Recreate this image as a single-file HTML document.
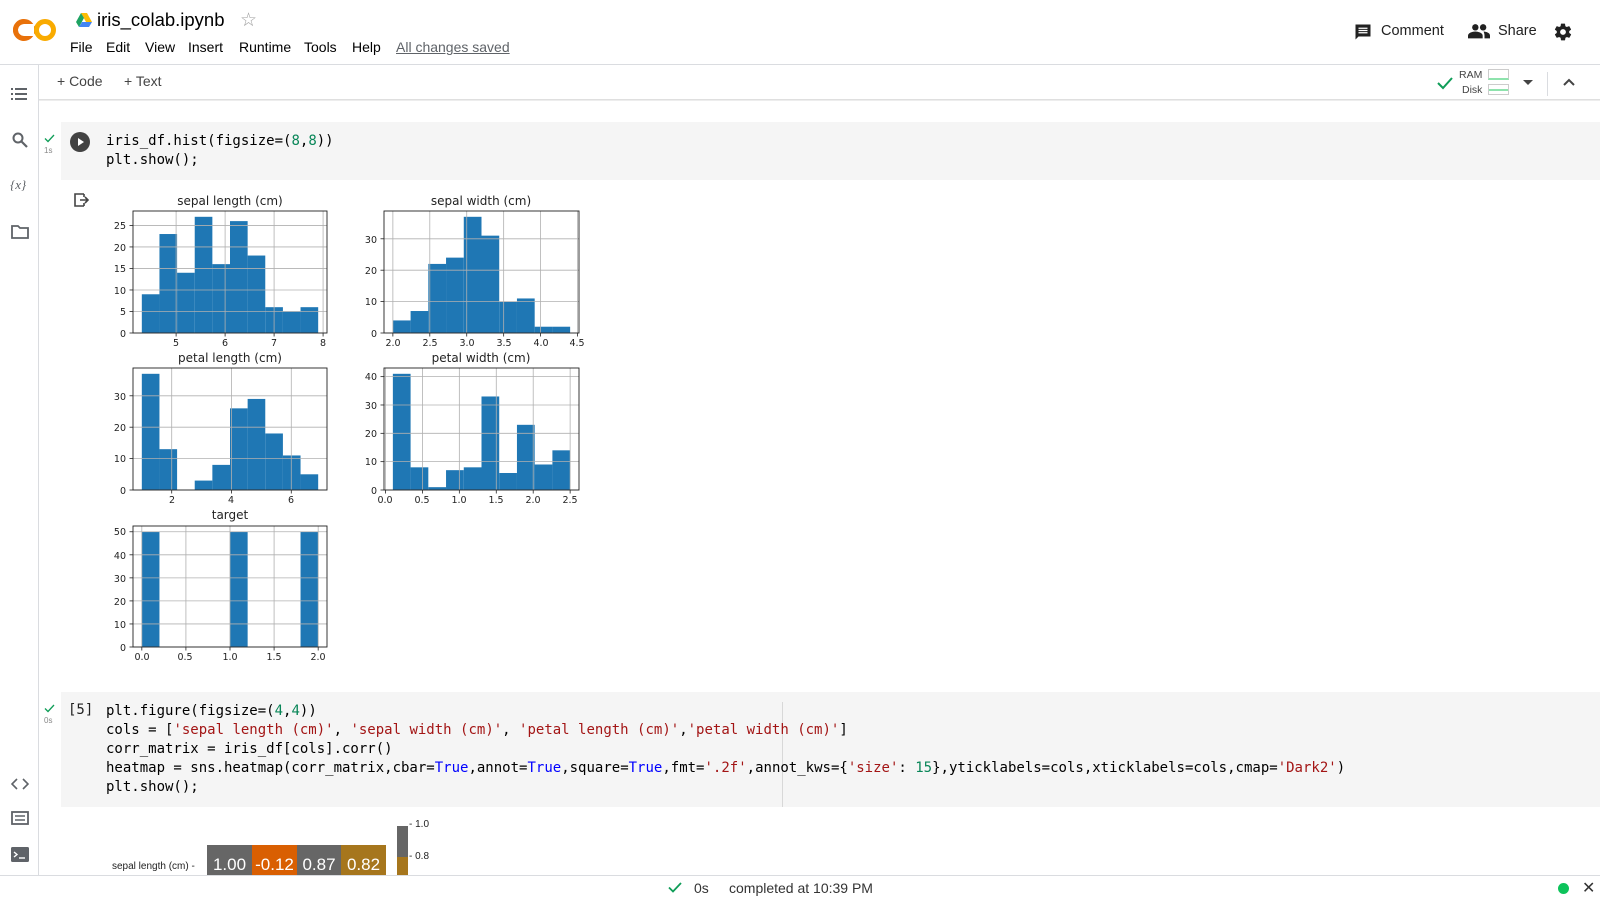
<!DOCTYPE html>
<html><head><meta charset="utf-8"><style>
*{box-sizing:border-box;margin:0;padding:0}
body{width:1600px;height:900px;overflow:hidden;background:#fff;font-family:"Liberation Sans",Arial,sans-serif;color:#212121;position:relative}
.a{position:absolute;white-space:pre}
.mono{font-family:"DejaVu Sans Mono","Liberation Mono",monospace;font-size:14px;color:#000}
.s{color:#a31515}.n{color:#098658}.k{color:#0000ff}
.menu{font-size:14px;top:39px;color:#000}
.hc{position:absolute;top:845px;height:31px;color:#fff;font-size:17px;text-align:center;line-height:40px;overflow:hidden}
</style></head><body>
<!-- logo -->
<svg class="a" style="left:12px;top:16px" width="46" height="28" viewBox="0 0 46 28">
<circle cx="12" cy="14" r="8.5" fill="none" stroke="#e8710a" stroke-width="5"/>
<rect x="12" y="8" width="10" height="12" fill="#fff"/>
<circle cx="33" cy="14" r="8.5" fill="none" stroke="#f9ab00" stroke-width="5"/>
<path d="M12 5.5 A8.5 8.5 0 0 0 12 22.5" fill="none" stroke="#e8710a" stroke-width="5"/>
</svg>
<svg class="a" style="left:76px;top:13px" width="16" height="14" viewBox="0 0 16 14"><path d="M5 0h6l5 9h-6z" fill="#fbbc04"/><path d="M5 0L0 9l3 5 5-9z" fill="#1ea362"/><path d="M3 14h10l3-5H6z" fill="#4285f4"/></svg>
<div class="a" style="left:97px;top:9px;font-size:18.5px;color:#000">iris_colab.ipynb</div>
<div class="a" style="left:240px;top:9px;font-size:19px;color:#9e9e9e">☆</div>
<div class="a menu" style="left:70px">File</div>
<div class="a menu" style="left:106px">Edit</div>
<div class="a menu" style="left:145px">View</div>
<div class="a menu" style="left:188px">Insert</div>
<div class="a menu" style="left:239px">Runtime</div>
<div class="a menu" style="left:304px">Tools</div>
<div class="a menu" style="left:352px">Help</div>
<div class="a menu" style="left:396px;color:#5f6368;text-decoration:underline">All changes saved</div>
<svg class="a" style="left:1354px;top:23px" width="18" height="18" viewBox="0 0 24 24"><path d="M2 2h20v16H6l-4 4z" fill="#212121"/><path d="M6 7h12M6 10h12M6 13h12" stroke="#fff" stroke-width="1.6"/></svg>
<div class="a" style="left:1381px;top:23px;font-size:14.5px">Comment</div>
<svg class="a" style="left:1468px;top:23px" width="22" height="16" viewBox="0 0 24 16"><circle cx="8" cy="4" r="3.5" fill="#212121"/><circle cx="16.5" cy="4" r="3.5" fill="#212121"/><path d="M0 16v-3c0-3 5-4.5 8-4.5s8 1.5 8 4.5v3z" fill="#212121"/><path d="M17 8.6c3 .2 7 1.5 7 4.4v3h-6v-3c0-1.7-.5-3-1-4.4z" fill="#212121"/></svg>
<div class="a" style="left:1498px;top:23px;font-size:14.5px">Share</div>
<svg class="a" style="left:1553px;top:22px" width="20" height="20" viewBox="0 0 24 24"><path fill="#212121" d="M19.4 13c.04-.3.06-.65.06-1s-.02-.7-.06-1l2.1-1.650c.2-.15.25-.42.12-.64l-2-3.46c-.12-.22-.4-.3-.6-.22l-2.5 1c-.52-.4-1.080-.73-1.7-.98l-.37-2.65A.5.5 0 0 0 14 2h-4a.5.5 0 0 0-.5.42l-.37 2.65c-.62.25-1.180.59-1.7.98l-2.5-1c-.23-.08-.48 0-.6.22l-2 3.46c-.13.22-.07.49.12.64L4.57 11c-.04.32-.07.66-.07 1s.03.68.07 1l-2.1 1.65c-.2.15-.25.42-.12.64l2 3.46c.12.22.4.3.6.22l2.5-1c.52.4 1.08.73 1.7.98l.37 2.65c.04.24.25.42.5.42h4c.25 0 .46-.18.5-.42l.37-2.65c.62-.25 1.18-.58 1.7-.98l2.5 1c.23.08.48 0 .6-.22l2-3.46c.12-.22.07-.49-.12-.64zM12 15.5A3.5 3.5 0 1 1 12 8.5a3.5 3.5 0 0 1 0 7z"/></svg>
<div class="a" style="left:0;top:64px;width:1600px;height:1px;background:#dadce0"></div>
<!-- sidebar -->
<div class="a" style="left:38px;top:65px;width:1px;height:810px;background:#dadce0"></div>
<svg class="a" style="left:11px;top:87px" width="16" height="14" viewBox="0 0 16 14"><g fill="#5f6368"><rect x="0" y="1" width="2" height="2"/><rect x="0" y="6" width="2" height="2"/><rect x="0" y="11" width="2" height="2"/><rect x="4" y="1" width="12" height="2"/><rect x="4" y="6" width="12" height="2"/><rect x="4" y="11" width="12" height="2"/></g></svg>
<svg class="a" style="left:12px;top:132px" width="16" height="16" viewBox="0 0 16 16"><circle cx="6" cy="6" r="4.5" fill="none" stroke="#5f6368" stroke-width="2"/><path d="M9.5 9.5L15 15" stroke="#5f6368" stroke-width="2.2"/></svg>
<div class="a" style="left:10px;top:177px;font-size:13px;font-style:italic;color:#5f6368;font-family:'Liberation Serif',serif">{<i>x</i>}</div>
<svg class="a" style="left:11px;top:225px" width="18" height="14" viewBox="0 0 18 14"><path d="M1 1h6l2 2h8v10H1z" fill="none" stroke="#5f6368" stroke-width="1.8"/></svg>
<svg class="a" style="left:11px;top:778px" width="18" height="12" viewBox="0 0 18 12"><path d="M6 1L1 6l5 5M12 1l5 5-5 5" fill="none" stroke="#5f6368" stroke-width="1.6"/></svg>
<svg class="a" style="left:11px;top:811px" width="18" height="14" viewBox="0 0 18 14"><rect x="1" y="1" width="16" height="12" fill="none" stroke="#5f6368" stroke-width="1.8"/><path d="M4 5h10M4 9h10" stroke="#5f6368" stroke-width="1.5"/></svg>
<svg class="a" style="left:11px;top:847px" width="18" height="15" viewBox="0 0 18 15"><rect x="0" y="0" width="18" height="15" rx="1.5" fill="#5f6368"/><path d="M3 5l3 2.5L3 10" fill="none" stroke="#fff" stroke-width="1.4"/><path d="M8 11h6" stroke="#fff" stroke-width="1.4"/></svg>
<!-- toolbar -->
<div class="a" style="left:57px;top:73px;font-size:14px;color:#444">+ Code</div>
<div class="a" style="left:124px;top:73px;font-size:14px;color:#444">+ Text</div>
<div class="a" style="left:39px;top:99px;width:1561px;height:2px;background:linear-gradient(#d8d8d8,#f4f4f4)"></div>
<svg class="a" style="left:1437px;top:76px" width="16" height="14" viewBox="0 0 16 14"><path d="M1 7l5 5L15 2" fill="none" stroke="#0f9d58" stroke-width="2"/></svg>
<div class="a" style="left:1459px;top:69px;font-size:10.5px;color:#444">RAM</div>
<div class="a" style="left:1462px;top:84px;font-size:10.5px;color:#444">Disk</div>
<div class="a" style="left:1488px;top:69px;width:21px;height:11px;border:1px solid #ccc;border-bottom:2px solid #8ee3ad"></div>
<div class="a" style="left:1488px;top:84px;width:21px;height:11px;border:1px solid #ccc"><div style="margin-top:4px;height:2px;background:#8ee3ad"></div></div>
<div class="a" style="left:1523px;top:80px;border:5px solid transparent;border-top-color:#444"></div>
<div class="a" style="left:1547px;top:72px;width:1px;height:24px;background:#dadce0"></div>
<svg class="a" style="left:1562px;top:77px" width="14" height="10" viewBox="0 0 14 10"><path d="M2 8l5-5 5 5" fill="none" stroke="#444" stroke-width="2"/></svg>
<!-- cell 1 -->
<div class="a" style="left:61px;top:122px;width:1539px;height:58px;background:#f5f5f5"></div>
<svg class="a" style="left:44px;top:134px" width="11" height="9" viewBox="0 0 11 9"><path d="M1 4.5l3 3L10 1" fill="none" stroke="#0f9d58" stroke-width="1.3"/></svg>
<div class="a" style="left:44px;top:146px;font-size:8px;color:#888">1s</div>
<svg class="a" style="left:70px;top:132px" width="20" height="20" viewBox="0 0 20 20"><circle cx="10" cy="10" r="10" fill="#424242"/><path d="M8 6v8l6-4z" fill="#fff"/></svg>
<div class="a mono" style="left:106px;top:132px;line-height:19px">iris_df.hist(figsize=(<span class="n">8</span>,<span class="n">8</span>))
plt.show();</div>
<svg class="a" style="left:74px;top:193px" width="16" height="14" viewBox="0 0 16 14"><path d="M10 1H1v12h9M10 4v-3M10 10v3" fill="none" stroke="#444" stroke-width="1.6"/><path d="M6 7h8M11 4l3 3-3 3" fill="none" stroke="#444" stroke-width="1.6"/></svg>
<!-- histograms -->
<svg id="h" class="a" style="left:0;top:0" width="700" height="700" font-family="DejaVu Sans, Liberation Sans, sans-serif" font-size="9.5" fill="#222">
<g id="hg"></g>
<g font-size="12" text-anchor="middle">
<text x="230" y="205">sepal length (cm)</text><text x="481" y="205">sepal width (cm)</text>
<text x="230" y="362">petal length (cm)</text><text x="481" y="362">petal width (cm)</text>
<text x="230" y="519">target</text></g>
<g text-anchor="end">
<text x="126" y="337">0</text><text x="126" y="315">5</text><text x="126" y="294">10</text><text x="126" y="272">15</text><text x="126" y="251">20</text><text x="126" y="229">25</text>
<text x="377" y="337">0</text><text x="377" y="305">10</text><text x="377" y="274">20</text><text x="377" y="243">30</text>
<text x="126" y="494">0</text><text x="126" y="462">10</text><text x="126" y="431">20</text><text x="126" y="400">30</text>
<text x="377" y="494">0</text><text x="377" y="465">10</text><text x="377" y="437">20</text><text x="377" y="409">30</text><text x="377" y="380">40</text>
<text x="126" y="651">0</text><text x="126" y="628">10</text><text x="126" y="605">20</text><text x="126" y="582">30</text><text x="126" y="559">40</text><text x="126" y="535">50</text>
</g>
<g text-anchor="middle">
<text x="176" y="346">5</text><text x="225" y="346">6</text><text x="274" y="346">7</text><text x="323" y="346">8</text>
<text x="393" y="346">2.0</text><text x="430" y="346">2.5</text><text x="467" y="346">3.0</text><text x="504" y="346">3.5</text><text x="541" y="346">4.0</text><text x="577" y="346">4.5</text>
<text x="172" y="503">2</text><text x="231" y="503">4</text><text x="291" y="503">6</text>
<text x="385" y="503">0.0</text><text x="422" y="503">0.5</text><text x="459" y="503">1.0</text><text x="496" y="503">1.5</text><text x="533" y="503">2.0</text><text x="570" y="503">2.5</text>
<text x="142" y="660">0.0</text><text x="185" y="660">0.5</text><text x="230" y="660">1.0</text><text x="274" y="660">1.5</text><text x="318" y="660">2.0</text>
</g>
</svg>
<!-- cell 2 -->
<div class="a" style="left:61px;top:692px;width:1539px;height:115px;background:#f5f5f5"></div>
<div class="a" style="left:782px;top:702px;width:1px;height:105px;background:#d8d8d8"></div>
<svg class="a" style="left:44px;top:704px" width="11" height="9" viewBox="0 0 11 9"><path d="M1 4.5l3 3L10 1" fill="none" stroke="#0f9d58" stroke-width="1.3"/></svg>
<div class="a" style="left:44px;top:716px;font-size:8px;color:#888">0s</div>
<div class="a mono" style="left:68px;top:702px;color:#212121">[5]</div>
<div class="a mono" style="left:106px;top:702px;line-height:19px">plt.figure(figsize=(<span class="n">4</span>,<span class="n">4</span>))
cols = [<span class="s">'sepal length (cm)'</span>, <span class="s">'sepal width (cm)'</span>, <span class="s">'petal length (cm)'</span>,<span class="s">'petal width (cm)'</span>]
corr_matrix = iris_df[cols].corr()
heatmap = sns.heatmap(corr_matrix,cbar=<span class="k">True</span>,annot=<span class="k">True</span>,square=<span class="k">True</span>,fmt=<span class="s">'.2f'</span>,annot_kws={<span class="s">'size'</span>: <span class="n">15</span>},yticklabels=cols,xticklabels=cols,cmap=<span class="s">'Dark2'</span>)
plt.show();</div>
<!-- heatmap -->
<div class="a" style="left:112px;top:861px;font-size:10px;color:#222">sepal length (cm) -</div>
<div class="hc" style="left:207px;width:45px;background:#666">1.00</div>
<div class="hc" style="left:252px;width:45px;background:#d95f02">-0.12</div>
<div class="hc" style="left:297px;width:44px;background:#666">0.87</div>
<div class="hc" style="left:341px;width:45px;background:#a6761d">0.82</div>
<div class="a" style="left:397px;top:826px;width:11px;height:31px;background:#666"></div>
<div class="a" style="left:397px;top:857px;width:11px;height:20px;background:#a6761d"></div>
<div class="a" style="left:409px;top:819px;font-size:10px;color:#222">- 1.0</div>
<div class="a" style="left:409px;top:851px;font-size:10px;color:#222">- 0.8</div>
<!-- status bar -->
<div class="a" style="left:0;top:875px;width:1600px;height:25px;background:#fff;border-top:1px solid #dadce0"></div>
<svg class="a" style="left:668px;top:882px" width="14" height="11" viewBox="0 0 14 11"><path d="M1 5.5l4 4L13 1" fill="none" stroke="#0f9d58" stroke-width="1.8"/></svg>
<div class="a" style="left:694px;top:880px;font-size:14px;color:#333">0s</div>
<div class="a" style="left:729px;top:880px;font-size:14px;color:#333">completed at 10:39 PM</div>
<div class="a" style="left:1558px;top:883px;width:11px;height:11px;border-radius:50%;background:#0dc35b"></div>
<div class="a" style="left:1582px;top:878px;font-size:16px;color:#333">✕</div>
<script>
(function(){
var g=document.getElementById('hg'),o='';
function H(x0,x1,y0,y1,xl,xr,ym,counts,bs,bw,xt,yt){
 var sx=(x1-x0)/(xr-xl),sy=(y1-y0)/ym;
 counts.forEach(function(c,i){if(!c)return;var a=x0+(bs+i*bw-xl)*sx,b=x0+(bs+(i+1)*bw-xl)*sx;o+='<rect x="'+a+'" y="'+(y1-c*sy)+'" width="'+(b-a)+'" height="'+c*sy+'" fill="#1f77b4"/>';});
 xt.forEach(function(v){var x=x0+(v-xl)*sx;o+='<line x1="'+x+'" x2="'+x+'" y1="'+y0+'" y2="'+y1+'" stroke="#b0b0b0" stroke-width="0.8"/><line x1="'+x+'" x2="'+x+'" y1="'+y1+'" y2="'+(y1+3.5)+'" stroke="#222" stroke-width="0.8"/>';});
 yt.forEach(function(v){var y=y1-v*sy;o+='<line x1="'+x0+'" x2="'+x1+'" y1="'+y+'" y2="'+y+'" stroke="#b0b0b0" stroke-width="0.8"/><line x1="'+(x0-3.5)+'" x2="'+x0+'" y1="'+y+'" y2="'+y+'" stroke="#222" stroke-width="0.8"/>';});
 o+='<rect x="'+x0+'" y="'+y0+'" width="'+(x1-x0)+'" height="'+(y1-y0)+'" fill="none" stroke="#222" stroke-width="0.9"/>';
}
H(133,327,211,333,4.12,8.08,28.35,[9,23,14,27,16,26,18,6,5,6],4.3,0.36,[5,6,7,8],[0,5,10,15,20,25]);
H(384,579,211,333,1.88,4.52,38.85,[4,7,22,24,37,31,10,11,2,2],2.0,0.24,[2,2.5,3,3.5,4,4.5],[0,10,20,30]);
H(133,327,368,490,0.705,7.195,38.85,[37,13,0,3,8,26,29,18,11,5],1.0,0.59,[2,4,6],[0,10,20,30]);
H(384,579,368,490,-0.02,2.62,43.05,[41,8,1,7,8,33,6,23,9,14],0.1,0.24,[0,0.5,1,1.5,2,2.5],[0,10,20,30,40]);
H(133,327,526,647,-0.1,2.1,52.5,[50,0,0,0,0,50,0,0,0,50],0,0.2,[0,0.5,1,1.5,2],[0,10,20,30,40,50]);
g.innerHTML=o;
})();
</script>
</body></html>
